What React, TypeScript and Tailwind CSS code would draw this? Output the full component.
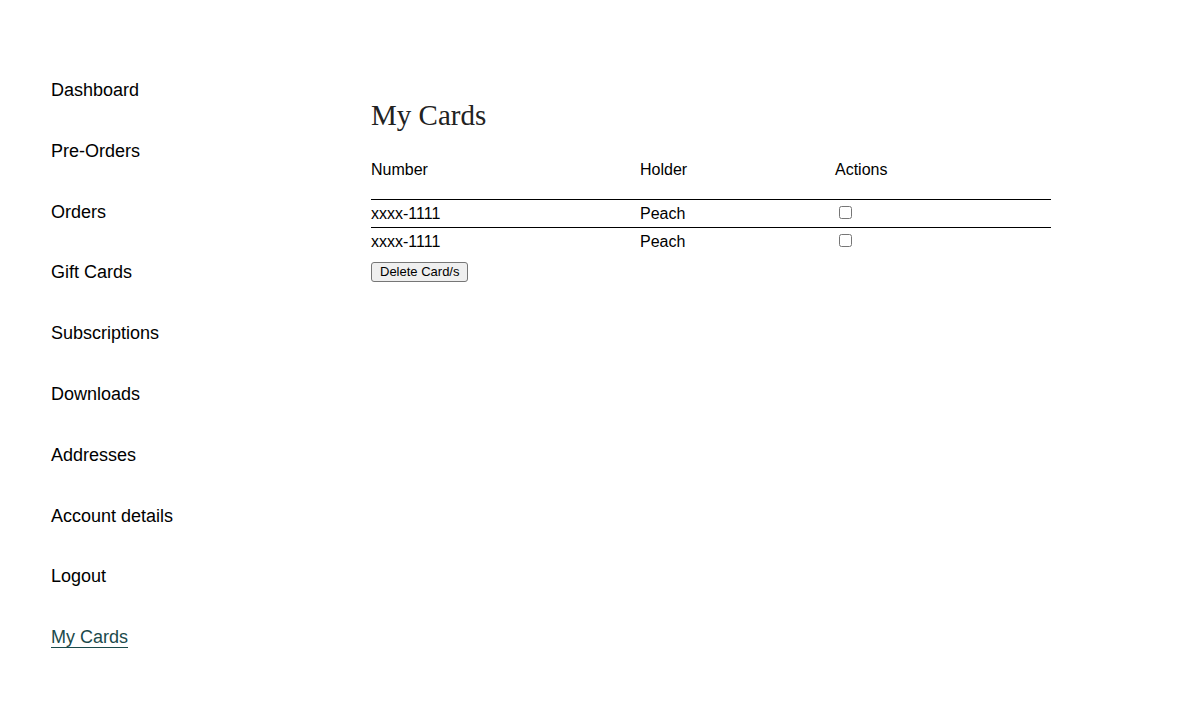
import React from "react";

const navItems = [
  "Dashboard",
  "Pre-Orders",
  "Orders",
  "Gift Cards",
  "Subscriptions",
  "Downloads",
  "Addresses",
  "Account details",
  "Logout",
];

const rows = [
  { number: "xxxx-1111", holder: "Peach" },
  { number: "xxxx-1111", holder: "Peach" },
];

export default function App() {
  return (
    <div
      className="min-h-[725px] bg-white text-black flex items-start pl-[51px]"
      style={{ fontFamily: '"Liberation Sans", Arial, sans-serif' }}
    >
      <nav className="w-[320px] shrink-0 pt-[77px]">
        <ul className="flex flex-col gap-[33.8px] text-[18px] leading-[27px]">
          {navItems.map((item) => (
            <li key={item}>
              <a href="#" className="text-black no-underline">
                {item}
              </a>
            </li>
          ))}
          <li>
            <a
              href="#"
              className="text-[#1b4a4b] underline decoration-1 underline-offset-[4px]"
            >
              My Cards
            </a>
          </li>
        </ul>
      </nav>
      <main className="w-[680px] shrink-0 pt-[99px]">
        <h1
          className="text-[29px] leading-[32px] font-normal text-[#222]"
          style={{ fontFamily: '"Liberation Serif", "Times New Roman", serif' }}
        >
          My Cards
        </h1>
        <table className="mt-[26px] w-full border-collapse text-[16px]">
          <thead>
            <tr className="border-b border-black">
              <th className="w-[269px] text-left font-normal leading-[24px] pt-[1px] pb-[17px] px-0 align-top">
                Number
              </th>
              <th className="w-[195px] text-left font-normal leading-[24px] pt-[1px] pb-[17px] px-0 align-top">
                Holder
              </th>
              <th className="text-left font-normal leading-[24px] pt-[1px] pb-[17px] px-0 align-top">
                Actions
              </th>
            </tr>
          </thead>
          <tbody>
            {rows.map((r, i) => (
              <tr
                key={i}
                className={i === 0 ? "border-b border-black h-[28px]" : "h-[28px]"}
              >
                <td className={i === 0 ? "p-0 align-middle leading-[20px]" : "px-0 pt-[1px] pb-0 align-middle leading-[20px]"}>{r.number}</td>
                <td className={i === 0 ? "p-0 align-middle leading-[20px]" : "px-0 pt-[1px] pb-0 align-middle leading-[20px]"}>{r.holder}</td>
                <td className="p-0 align-middle leading-[20px]">
                  <input
                    type="checkbox"
                    className="w-[13px] h-[13px] mt-0 mr-0 mb-[4px] ml-[4px] align-middle"
                  />
                </td>
              </tr>
            ))}
          </tbody>
        </table>
        <button
          type="button"
          className="mt-[6px] px-[8px] py-[1px] text-[13px] leading-[16px] bg-[#efefef] border border-[#767676] rounded-[3px] text-black"
          style={{ fontFamily: '"Liberation Sans", Arial, sans-serif' }}
        >
          Delete Card/s
        </button>
      </main>
    </div>
  );
}
